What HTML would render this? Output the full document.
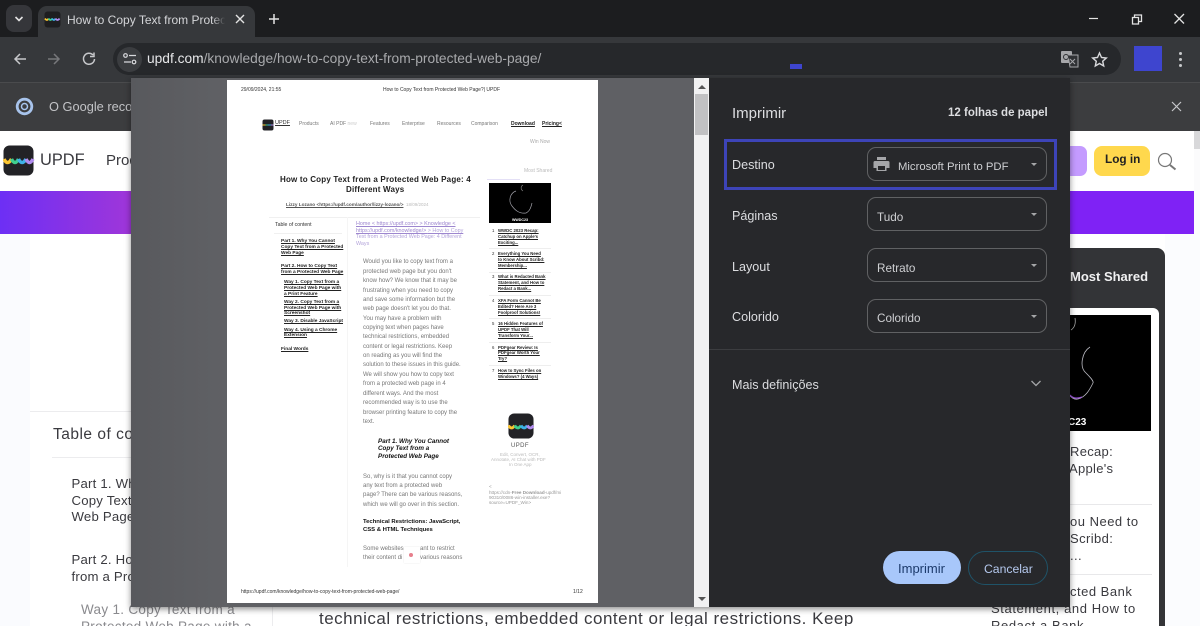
<!DOCTYPE html>
<html lang="pt">
<head>
<meta charset="utf-8">
<title>How to Copy Text from Protected Web Page</title>
<style>
html,body{margin:0;padding:0;width:1200px;height:626px;overflow:hidden;background:#fff}
body{position:relative;font-family:"Liberation Sans",sans-serif}
.b{position:absolute}
.t{position:absolute;white-space:nowrap;line-height:1}
.site{color:#3a3a3f}
#paper{position:absolute;left:227px;top:80px;width:371px;height:523px;background:#fff;overflow:hidden;filter:blur(.38px)}
#paper .t{color:#333}
.u{text-decoration:underline;font-weight:bold;color:#222!important}
.g{color:#777!important}
.p{color:#9d86cf!important;text-decoration:underline}
.sel{position:absolute;left:867px;width:178px;height:32px;border:1px solid #606163;border-radius:9px}
.sel:after{content:"";position:absolute;right:9px;top:15px;border:3.5px solid transparent;border-top:3.5px solid #a5a6a8;border-bottom:0}
.lab{position:absolute;left:732px;color:#dcdde0;font-size:12.600px;line-height:1;white-space:nowrap}
.val{position:absolute;color:#cfd0d3;font-size:11.700px;line-height:1;white-space:nowrap}
.l{font-size:4.300px}
.body{font-size:6px}
.toc{font-size:4.800px}
</style>
</head>
<body>

<!-- underlying site -->
<div class="b" style="left:0;top:131px;width:1200px;height:495px;background:#fff"></div>
<div class="b" style="left:0;top:191px;width:1194px;height:43px;background:linear-gradient(90deg,#6d2ff5 0,#9f36d9 131px,#8a2bea 600px,#7f22f5 1070px)"></div>
<div class="b" style="left:1194px;top:131px;width:6px;height:495px;background:#fbfbfc"></div>
<div class="b" style="left:1194px;top:131px;width:6px;height:18px;background:#d8d8da"></div>
<div class="b" style="left:0;top:234px;width:30px;height:392px;background:#fafbfe"></div>
<div class="b" style="left:1165px;top:234px;width:35px;height:392px;background:#fbfcfe"></div>
<svg class="b" style="left:3px;top:145px" width="32" height="32" viewBox="0 0 32 32"><rect x="0.5" y="0.5" width="30" height="30" rx="6" fill="#222226"/><path d="M1 14q3.500 7 7.500 0" fill="none" stroke="#fbc531" stroke-width="3.500"/><path d="M8.500 14q3.500 7 7 0" fill="none" stroke="#3fcf8e" stroke-width="3.500"/><path d="M15.500 14q3.500 7 7.500 0" fill="none" stroke="#3db2e8" stroke-width="3.500"/><path d="M23 14q3.500 7 7 0" fill="none" stroke="#b18cf0" stroke-width="3.500"/></svg>
<div class="t site" style="left:40px;top:152px;font-size:16.400px">UPDF</div>
<div class="t site" style="left:106px;top:153px;font-size:15px">Products</div>
<div class="b" style="left:1060px;top:146px;width:27px;height:30px;background:#c49bff;border-radius:0 7px 7px 0"></div>
<div class="b" style="left:1094px;top:146px;width:56px;height:30px;background:#ffd84d;border-radius:8px"></div>
<div class="t" style="left:1105px;top:154px;font-size:11.800px;font-weight:bold;color:#222">Log in</div>
<svg class="b" style="left:1156px;top:151px" width="22" height="22" viewBox="0 0 22 22"><circle cx="9" cy="9" r="6.500" fill="none" stroke="#777" stroke-width="1.200"/><path d="M14 14l5.500 4.500" stroke="#777" stroke-width="2"/></svg>

<div class="b" style="left:30px;top:411px;width:245px;height:1px;background:#ececee"></div>
<div class="b" style="left:52px;top:457px;width:230px;height:1px;background:#ececee"></div>
<div class="t site" style="left:53px;top:427px;font-size:15.500px;letter-spacing:.5px">Table of content</div>
<div class="t site" style="left:71.500px;top:477px;font-size:13.200px;letter-spacing:.2px">Part 1. Why</div>
<div class="t site" style="left:71.500px;top:494px;font-size:13.200px;letter-spacing:.2px">Copy Text</div>
<div class="t site" style="left:71.500px;top:510px;font-size:13.200px;letter-spacing:.2px">Web Page</div>
<div class="t site" style="left:71.500px;top:553px;font-size:13.200px;letter-spacing:.2px">Part 2. How</div>
<div class="t site" style="left:71.500px;top:570px;font-size:13.200px;letter-spacing:.2px">from a Pro</div>
<div class="t" style="left:81px;top:603px;font-size:13.500px;letter-spacing:.3px;color:#8a8a8e">Way 1. Copy Text from a</div>
<div class="t" style="left:81px;top:620px;font-size:13.500px;letter-spacing:.3px;color:#8a8a8e">Protected Web Page with a</div>
<div class="b" style="left:272px;top:600px;width:1px;height:26px;background:#ececee"></div>
<div class="t site" style="left:319px;top:610px;font-size:17px;letter-spacing:.5px">technical restrictions, embedded content or legal restrictions. Keep</div>

<!-- sidebar card -->
<div class="b" style="left:1040px;top:248px;width:125px;height:378px;background:#333437;border-radius:0 8px 0 0"></div>
<div class="t" style="left:1070px;top:270px;font-size:13px;font-weight:bold;color:#f1f1f2">Most Shared</div>
<div class="b" style="left:959px;top:308px;width:200px;height:318px;background:#fff;border-radius:0 6px 0 0"></div>
<div class="b" style="left:1040px;top:315px;width:111px;height:116px;background:#000"></div>
<svg class="b" style="left:1040px;top:315px" width="111" height="116" viewBox="0 0 111 116"><path d="M50 32C42 37 39 52 46 58C50 62 54 66 53 68C50 74 46 82 38 84C34 85 31 82 29 80" fill="none" stroke="#b8b8c0" stroke-width=".8"/><path d="M35 3C36 9 34 13 31 15" fill="none" stroke="#aaa" stroke-width=".8"/><path d="M30 80q4 5 12 2" fill="none" stroke="#9a53d8" stroke-width="1.200"/></svg>
<div class="t" style="left:1068px;top:418px;font-size:10px;font-weight:bold;color:#fff">C23</div>
<div class="t site" style="left:1070px;top:445px;font-size:13px;letter-spacing:.3px">Recap:</div>
<div class="t site" style="left:1069px;top:462px;font-size:13px;letter-spacing:.3px">Apple's</div>
<div class="b" style="left:1040px;top:504px;width:112px;height:1px;background:#e8e8ea"></div>
<div class="t site" style="left:1070px;top:515px;font-size:13px;letter-spacing:.5px">ou Need to</div>
<div class="t site" style="left:1070px;top:532px;font-size:13px;letter-spacing:.4px">Scribd:</div>
<div class="t site" style="left:1070px;top:549px;font-size:13px;letter-spacing:.4px">...</div>
<div class="b" style="left:1040px;top:574px;width:112px;height:1px;background:#e8e8ea"></div>
<div class="t site" style="left:1070px;top:585px;font-size:13px;letter-spacing:.5px">cted Bank</div>
<div class="t site" style="left:991px;top:602px;font-size:13px;letter-spacing:.6px">Statement, and How to</div>
<div class="t site" style="left:991px;top:619px;font-size:13px;letter-spacing:.6px">Redact a Bank</div>

<!-- browser chrome -->
<div class="b" style="left:0;top:0;width:1200px;height:37px;background:#1c1d1f"></div>
<div class="b" style="left:6px;top:5px;width:26px;height:27px;background:#35363a;border-radius:8px"></div>
<svg class="b" style="left:12px;top:14px" width="14" height="10" viewBox="0 0 14 10"><path d="M3.500 3l3.500 3.500L10.500 3" fill="none" stroke="#e3e3e3" stroke-width="1.600"/></svg>
<div class="b" style="left:38px;top:6px;width:217px;height:32px;background:#36383b;border-radius:9px 9px 0 0"></div>
<svg class="b" style="left:44px;top:11px" width="17" height="17" viewBox="0 0 17 17"><rect width="16" height="16" rx="3" x=".5" y=".5" fill="#1e1e20"/><path d="M1 7.500q2 3 3.500 0" fill="none" stroke="#fbc531" stroke-width="1.800"/><path d="M4.500 7.500q2 3 3.500 0" fill="none" stroke="#3fcf8e" stroke-width="1.800"/><path d="M8 7.500q2 3 3.500 0" fill="none" stroke="#3db2e8" stroke-width="1.800"/><path d="M11.500 7.500q2 3 4 0" fill="none" stroke="#b18cf0" stroke-width="1.800"/></svg>
<div class="b" style="left:67px;top:13px;width:158px;height:16px;overflow:hidden"><div class="t" style="left:0;top:1px;font-size:12px;color:#d4d5d8">How to Copy Text from Protected Web</div></div>
<div class="b" style="left:212px;top:12px;width:13px;height:18px;background:linear-gradient(90deg,rgba(54,56,59,0),#36383b)"></div>
<svg class="b" style="left:234px;top:13px" width="12" height="12" viewBox="0 0 12 12"><path d="M2 2l8 8M10 2l-8 8" stroke="#e3e3e3" stroke-width="1.400"/></svg>
<svg class="b" style="left:267px;top:12px" width="14" height="14" viewBox="0 0 14 14"><path d="M7 2v10M2 7h10" stroke="#e3e3e3" stroke-width="1.500"/></svg>
<svg class="b" style="left:1087px;top:10px" width="100" height="18" viewBox="0 0 100 18"><path d="M2 8.500h9" stroke="#e3e3e3" stroke-width="1.200"/><path d="M45.500 7.500h6v6.500h-6zM47.500 7.500v-2.500h7v6.500h-3" fill="none" stroke="#e3e3e3" stroke-width="1.300"/><path d="M87.500 4l9.500 9.500M97 4l-9.500 9.500" stroke="#e3e3e3" stroke-width="1.300"/></svg>

<div class="b" style="left:0;top:37px;width:1200px;height:45px;background:#36383b"></div>
<svg class="b" style="left:11px;top:50px" width="100" height="18" viewBox="0 0 100 18"><path d="M15 9H4M9 4L4 9l5 5" fill="none" stroke="#c7c8cb" stroke-width="1.500"/><path d="M37 9h10M43 4l5 5-5 5" fill="none" stroke="#77787b" stroke-width="1.500"/><path d="M82 5a5.500 5.500 0 1 0 1.500 4M83 2.500v4h-4" fill="none" stroke="#c7c8cb" stroke-width="1.500"/></svg>
<div class="b" style="left:113px;top:43px;width:1008px;height:32px;background:#26282b;border-radius:16px"></div>
<div class="b" style="left:117px;top:47px;width:25px;height:25px;background:#3b3d40;border-radius:50%"></div>
<svg class="b" style="left:122px;top:52px" width="16" height="14" viewBox="0 0 16 14"><circle cx="3.500" cy="3.500" r="1.800" fill="none" stroke="#d8d9dc" stroke-width="1.200"/><path d="M7 3.500h7M2 10h7" stroke="#d8d9dc" stroke-width="1.200"/><circle cx="12" cy="10" r="1.800" fill="none" stroke="#d8d9dc" stroke-width="1.200"/></svg>
<div class="t" style="left:147px;top:52px;font-size:13.750px;color:#a8a9ac"><span style="color:#e6e7e9">updf.com</span>/knowledge/how-to-copy-text-from-protected-web-page/</div>
<svg class="b" style="left:1060px;top:50px" width="20" height="19" viewBox="0 0 20 19"><rect x="1" y="1" width="11" height="12" rx="1" fill="#a6a7aa"/><path d="M8 5h10v12H10z" fill="#303235" stroke="#a6a7aa"/><path d="M10 9l5 5M15 9l-5 5" stroke="#a6a7aa"/><circle cx="6" cy="7" r="2.500" fill="none" stroke="#303235"/></svg>
<svg class="b" style="left:1091px;top:51px" width="17" height="17" viewBox="0 0 17 17"><path d="M8.500 2l2 4.500 4.800.5-3.600 3.200 1 4.800-4.200-2.500-4.200 2.500 1-4.800L1.700 7l4.800-.5z" fill="none" stroke="#d8d9dc" stroke-width="1.400"/></svg>
<div class="b" style="left:1134px;top:46px;width:28px;height:25px;background:#3e45cf"></div>
<div class="b" style="left:1179px;top:52px;width:3px;height:3px;background:#c7c8cb;border-radius:50%;box-shadow:0 6px 0 #c7c8cb,0 12px 0 #c7c8cb"></div>
<div class="b" style="left:790px;top:64px;width:12px;height:5px;background:#3e45cf"></div>

<div class="b" style="left:0;top:82px;width:1200px;height:49px;background:#3c3d3f"></div>
<div class="b" style="left:0;top:82px;width:1200px;height:1px;background:#4a4b4d"></div>
<svg class="b" style="left:15px;top:97px" width="19" height="19" viewBox="0 0 19 19"><circle cx="9.500" cy="9.500" r="7.300" fill="none" stroke="#a8c4ec" stroke-width="2.800"/><circle cx="9.500" cy="9.500" r="3" fill="none" stroke="#a8c4ec" stroke-width="1.500"/></svg>
<div class="t" style="left:49px;top:101px;font-size:12.800px;color:#c2c3c6">O Google recomenda</div>
<svg class="b" style="left:1170px;top:100px" width="13" height="13" viewBox="0 0 13 13"><path d="M2 2l9 9M11 2l-9 9" stroke="#c7c8cb" stroke-width="1.200"/></svg>

<!-- print dialog -->
<div class="b" style="left:131px;top:78px;width:939px;height:529px;background:#5f6064;box-shadow:0 2px 6px rgba(0,0,0,.45)"></div>
<div class="b" style="left:131px;top:78px;width:96px;height:529px;background:linear-gradient(90deg,#58595d,#606165)"></div>

<div id="paper">
  <div class="t" style="left:14px;top:8px;font-size:5px">29/09/2024, 21:55</div>
  <div class="t" style="left:156px;top:8px;font-size:5px">How to Copy Text from Protected Web Page?| UPDF</div>
  <svg class="b" style="left:35px;top:39px" width="12" height="12" viewBox="0 0 12 12"><rect width="11" height="11" x=".5" y=".5" rx="2" fill="#222226"/><path d="M.5 6h3" stroke="#fbc531"/><path d="M3.500 6h2.500" stroke="#3fcf8e"/><path d="M6 6h3" stroke="#3db2e8"/><path d="M9 6h2.500" stroke="#b18cf0"/></svg>
  <div class="t" style="left:48px;top:41px;font-size:5.500px;text-decoration:underline">UPDF</div>
  <div class="t g" style="left:72px;top:42px;font-size:5px">Products</div>
  <div class="t g" style="left:103px;top:42px;font-size:5px">AI PDF <span style="color:#ccc">new</span></div>
  <div class="t g" style="left:143px;top:42px;font-size:5px">Features</div>
  <div class="t g" style="left:175px;top:42px;font-size:5px">Enterprise</div>
  <div class="t g" style="left:210px;top:42px;font-size:5px">Resources</div>
  <div class="t g" style="left:244px;top:42px;font-size:5px">Comparison</div>
  <div class="t u" style="left:284px;top:42px;font-size:5px">Download</div>
  <div class="t u" style="left:315px;top:42px;font-size:5px">Pricing&lt;</div>
  <div class="t" style="left:303px;top:59.500px;font-size:5px;color:#aaa!important">Win Now</div>
  <div class="t" style="left:297px;top:89px;font-size:5px;color:#bbb!important">Most Shared</div>
  <div class="b" style="left:260px;top:99px;width:33px;height:1px;background:#e4e0f6"></div>

  <div class="t" style="left:53px;top:96px;font-size:8px;font-weight:bold;letter-spacing:.19px;color:#222!important">How to Copy Text from a Protected Web Page: 4</div>
  <div class="t" style="left:119px;top:106px;font-size:8px;font-weight:bold;letter-spacing:.19px;color:#222!important">Different Ways</div>
  <div class="t u" style="left:59px;top:122.500px;font-size:4.700px;color:#555!important">Lizzy Lozano &lt;https://updf.com/author/lizzy-lozano/&gt;</div>
  <div class="t" style="left:179px;top:122.500px;font-size:4.500px;color:#bbb!important">18/09/2024</div>
  <div class="b" style="left:42px;top:137px;width:211px;height:1px;background:#f0f0f0"></div>
  <div class="b" style="left:120px;top:137px;width:1px;height:350px;background:#f5f5f5"></div>

  <!-- mini thumb -->
  <div class="b" style="left:262px;top:103px;width:62px;height:40px;background:#000"></div>
  <svg class="b" style="left:262px;top:103px" width="62" height="40" viewBox="0 0 62 40"><path d="M27 8C21 10 19 18 23 23C26 27 30 31 37 30C41 28 42 24 43 20" fill="none" stroke="#a0a0a8" stroke-width=".7"/><path d="M34 2C32 3 31 6 34 8" fill="none" stroke="#888" stroke-width=".6"/></svg>
  <div class="t" style="left:285px;top:139px;font-size:3.600px;font-weight:bold;color:#fff!important">WWDC23</div>

  <div class="t" style="left:48px;top:143px;font-size:5.200px">Table of content</div>
  <div class="b" style="left:47px;top:153px;width:68px;height:1px;background:#f0f0f0"></div>
  <div class="t u toc" style="left:54px;top:160px">Part 1. Why You Cannot</div>
  <div class="t u toc" style="left:54px;top:166px">Copy Text from a Protected</div>
  <div class="t u toc" style="left:54px;top:172px">Web Page</div>
  <div class="t u toc" style="left:54px;top:185px">Part 2. How to Copy Text</div>
  <div class="t u toc" style="left:54px;top:191px">from a Protected Web Page</div>
  <div class="t u toc" style="left:57px;top:201px">Way 1. Copy Text from a</div>
  <div class="t u toc" style="left:57px;top:207px">Protected Web Page with</div>
  <div class="t u toc" style="left:57px;top:213px">a Print Feature</div>
  <div class="t u toc" style="left:57px;top:221px">Way 2. Copy Text from a</div>
  <div class="t u toc" style="left:57px;top:227px">Protected Web Page with</div>
  <div class="t u toc" style="left:57px;top:232px">Screenshot</div>
  <div class="t u toc" style="left:57px;top:240px">Way 3. Disable JavaScript</div>
  <div class="t u toc" style="left:57px;top:249px">Way 4. Using a Chrome</div>
  <div class="t u toc" style="left:57px;top:254px">Extension</div>
  <div class="t u toc" style="left:54px;top:268px">Final Words</div>

  <div class="t p" style="left:129px;top:142px;font-size:5.400px">Home &lt; https://updf.com&gt; &gt; Knowledge &lt;</div>
  <div class="t p" style="left:129px;top:149px;font-size:5.400px">https://updf.com/knowledge/&gt; <span style="text-decoration:none;color:#b3a4da">&gt; How to Copy</span></div>
  <div class="t" style="left:129px;top:155px;font-size:5.400px;color:#b3a4da!important">Text from a Protected Web Page: 4 Different</div>
  <div class="t" style="left:129px;top:162px;font-size:5.400px;color:#b3a4da!important">Ways</div>

  <div class="t g body" style="left:136px;top:179px">Would you like to copy text from a</div>
  <div class="t g body" style="left:136px;top:189px">protected web page but you don't</div>
  <div class="t g body" style="left:136px;top:198px">know how? We know that it may be</div>
  <div class="t g body" style="left:136px;top:208px">frustrating when you need to copy</div>
  <div class="t g body" style="left:136px;top:217px">and save some information but the</div>
  <div class="t g body" style="left:136px;top:226px">web page doesn't let you do that.</div>
  <div class="t g body" style="left:136px;top:236px">You may have a problem with</div>
  <div class="t g body" style="left:136px;top:245px">copying text when pages have</div>
  <div class="t g body" style="left:136px;top:254px">technical restrictions, embedded</div>
  <div class="t g body" style="left:136px;top:264px">content or legal restrictions. Keep</div>
  <div class="t g body" style="left:136px;top:273px">on reading as you will find the</div>
  <div class="t g body" style="left:136px;top:282px">solution to these issues in this guide.</div>
  <div class="t g body" style="left:136px;top:292px">We will show you how to copy text</div>
  <div class="t g body" style="left:136px;top:301px">from a protected web page in 4</div>
  <div class="t g body" style="left:136px;top:311px">different ways. And the most</div>
  <div class="t g body" style="left:136px;top:320px">recommended way is to use the</div>
  <div class="t g body" style="left:136px;top:330px">browser printing feature to copy the</div>
  <div class="t g body" style="left:136px;top:339px">text.</div>

  <div class="t" style="left:151px;top:359px;font-size:6.300px;font-weight:bold;font-style:italic;color:#111!important">Part 1. Why You Cannot</div>
  <div class="t" style="left:151px;top:366px;font-size:6.300px;font-weight:bold;font-style:italic;color:#111!important">Copy Text from a</div>
  <div class="t" style="left:151px;top:374px;font-size:6.300px;font-weight:bold;font-style:italic;color:#111!important">Protected Web Page</div>

  <div class="t g body" style="left:136px;top:394px">So, why is it that you cannot copy</div>
  <div class="t g body" style="left:136px;top:403px">any text from a protected web</div>
  <div class="t g body" style="left:136px;top:412px">page? There can be various reasons,</div>
  <div class="t g body" style="left:136px;top:422px">which we will go over in this section.</div>
  <div class="t" style="left:136px;top:440px;font-size:5.900px;font-weight:bold;color:#111!important">Technical Restrictions: JavaScript,</div>
  <div class="t" style="left:136px;top:448px;font-size:5.900px;font-weight:bold;color:#111!important">CSS &amp; HTML Techniques</div>
  <div class="t g body" style="left:136px;top:466px">Some websites</div>
  <div class="t g body" style="left:193px;top:466px">ant to restrict</div>
  <div class="t g body" style="left:136px;top:475px">their content di</div>
  <div class="t g body" style="left:193px;top:475px">various reasons</div>
  <div class="b" style="left:177px;top:467px;width:16px;height:16px;background:#fff;box-shadow:0 0 1px #ddd"></div>
  <div class="b" style="left:182px;top:473px;width:4px;height:4px;border-radius:50%;background:#e77f8c"></div>

  <!-- list -->
  <div class="t l" style="left:265px;top:149px">1</div>
  <div class="t u l" style="left:271px;top:149px">WWDC 2023 Recap:</div>
  <div class="t u l" style="left:271px;top:155px">Catchup on Apple's</div>
  <div class="t u l" style="left:271px;top:161px">Exciting...</div>
  <div class="b" style="left:262px;top:168px;width:62px;height:1px;background:#eee"></div>
  <div class="t l" style="left:265px;top:172px">2</div>
  <div class="t u l" style="left:271px;top:172px">Everything You Need</div>
  <div class="t u l" style="left:271px;top:178px">to Know About Scribd:</div>
  <div class="t u l" style="left:271px;top:184px">Membership...</div>
  <div class="b" style="left:262px;top:192px;width:62px;height:1px;background:#eee"></div>
  <div class="t l" style="left:265px;top:195px">3</div>
  <div class="t u l" style="left:271px;top:195px">What is Redacted Bank</div>
  <div class="t u l" style="left:271px;top:201px">Statement, and How to</div>
  <div class="t u l" style="left:271px;top:207px">Redact a Bank...</div>
  <div class="b" style="left:262px;top:215px;width:62px;height:1px;background:#eee"></div>
  <div class="t l" style="left:265px;top:219px">4</div>
  <div class="t u l" style="left:271px;top:219px">XFA Form Cannot Be</div>
  <div class="t u l" style="left:271px;top:225px">Edited? Here Are 3</div>
  <div class="t u l" style="left:271px;top:231px">Foolproof Solutions!</div>
  <div class="b" style="left:262px;top:238px;width:62px;height:1px;background:#eee"></div>
  <div class="t l" style="left:265px;top:242px">5</div>
  <div class="t u l" style="left:271px;top:242px">16 Hidden Features of</div>
  <div class="t u l" style="left:271px;top:248px">UPDF That Will</div>
  <div class="t u l" style="left:271px;top:254px">Transform Your...</div>
  <div class="b" style="left:262px;top:262px;width:62px;height:1px;background:#eee"></div>
  <div class="t l" style="left:265px;top:266px">6</div>
  <div class="t u l" style="left:271px;top:266px">PDFgear Review: Is</div>
  <div class="t u l" style="left:271px;top:271px">PDFgear Worth Your</div>
  <div class="t u l" style="left:271px;top:277px">Try?</div>
  <div class="b" style="left:262px;top:285px;width:62px;height:1px;background:#eee"></div>
  <div class="t l" style="left:265px;top:289px">7</div>
  <div class="t u l" style="left:271px;top:289px">How to Sync Files on</div>
  <div class="t u l" style="left:271px;top:295px">Windows? (4 Ways)</div>

  <svg class="b" style="left:281px;top:333px" width="26" height="26" viewBox="0 0 27 27"><rect x=".5" y=".5" width="26" height="26" rx="6" fill="#222226"/><path d="M.5 13q3 5 6.500 0" fill="none" stroke="#fbc531" stroke-width="3"/><path d="M7 13q3 5 6.500 0" fill="none" stroke="#3fcf8e" stroke-width="3"/><path d="M13.500 13q3 5 6.500 0" fill="none" stroke="#3db2e8" stroke-width="3"/><path d="M20 13q3 5 6.500 0" fill="none" stroke="#b18cf0" stroke-width="3"/></svg>
  <div class="t" style="left:284px;top:363px;font-size:6px;letter-spacing:.4px;color:#555!important">UPDF</div>
  <div class="t" style="left:273px;top:373px;font-size:4.500px;color:#bbb!important">Edit, Convert, OCR,</div>
  <div class="t" style="left:264px;top:378px;font-size:4.500px;color:#bbb!important">Annotate, AI Chat with PDF</div>
  <div class="t" style="left:282px;top:383px;font-size:4.500px;color:#bbb!important">In One App</div>
  <div class="t" style="left:262px;top:405px;font-size:4.600px;color:#999!important">&lt;</div>
  <div class="t" style="left:262px;top:411px;font-size:4.600px;color:#999!important">https://cdn-<b>Free Download</b>-updf/mi</div>
  <div class="t" style="left:262px;top:416px;font-size:4.600px;color:#999!important">90310/0086-win-installer.exe?</div>
  <div class="t" style="left:262px;top:421px;font-size:4.600px;color:#999!important">source=UPDF_Win&gt;</div>

  <div class="t" style="left:14px;top:510px;font-size:5px">https://updf.com/knowledge/how-to-copy-text-from-protected-web-page/</div>
  <div class="t" style="left:346px;top:510px;font-size:5px">1/12</div>
</div>

<!-- scrollbar -->
<div class="b" style="left:694px;top:78px;width:15px;height:529px;background:#f1f1f2"></div>
<div class="b" style="left:695px;top:94px;width:13px;height:41px;background:#c1c1c3"></div>
<div class="b" style="left:698px;top:85px;border:4px solid transparent;border-bottom:4px solid #555;border-top:0"></div>
<div class="b" style="left:698px;top:597px;border:4px solid transparent;border-top:4px solid #555;border-bottom:0"></div>

<!-- print sidebar -->
<div class="b" style="left:709px;top:78px;width:361px;height:529px;background:#27282b"></div>
<div class="t" style="left:732px;top:106px;font-size:15px;color:#dcdde0">Imprimir</div>
<div class="t" style="left:948px;top:108px;font-size:11.500px;font-weight:bold;color:#dcdde0">12 folhas de papel</div>

<div class="b" style="left:724px;top:139px;width:327px;height:45px;border:3px solid #3d44b8"></div>
<div class="lab" style="top:159px">Destino</div>
<div class="sel" style="top:147px"></div>
<svg class="b" style="left:873px;top:156px" width="17" height="16" viewBox="0 0 17 16"><path d="M4 1h9v3H4zM2 5h13a1.500 1.500 0 0 1 1.500 1.500V12H13.500v3h-10v-3H.5V6.500A1.500 1.500 0 0 1 2 5z" fill="#a5a6a9"/><rect x="5" y="10" width="7" height="4" fill="#27282b"/></svg>
<div class="val" style="left:898px;top:162px;font-size:11.300px">Microsoft Print to PDF</div>

<div class="lab" style="top:210px">Páginas</div>
<div class="sel" style="top:197px"></div>
<div class="val" style="left:877px;top:212px">Tudo</div>

<div class="lab" style="top:261px">Layout</div>
<div class="sel" style="top:248px"></div>
<div class="val" style="left:877px;top:263px">Retrato</div>

<div class="lab" style="top:311px">Colorido</div>
<div class="sel" style="top:299px"></div>
<div class="val" style="left:877px;top:313px">Colorido</div>

<div class="b" style="left:709px;top:349px;width:361px;height:1px;background:#3c3d40"></div>
<div class="lab" style="top:379px">Mais definições</div>
<svg class="b" style="left:1030px;top:379px" width="12" height="9" viewBox="0 0 12 9"><path d="M1.500 2l4.500 4.500L10.500 2" fill="none" stroke="#a5a6a9" stroke-width="1.300"/></svg>

<div class="b" style="left:883px;top:551px;width:78px;height:33px;background:#a8c7fa;border-radius:17px"></div>
<div class="t" style="left:898px;top:562px;font-size:13px;color:#1c3a6b">Imprimir</div>
<div class="b" style="left:968px;top:551px;width:78px;height:32px;border:1px solid #1f5368;border-radius:17px"></div>
<div class="t" style="left:984px;top:562.500px;font-size:12.200px;color:#b5c9ee">Cancelar</div>

</body>
</html>
